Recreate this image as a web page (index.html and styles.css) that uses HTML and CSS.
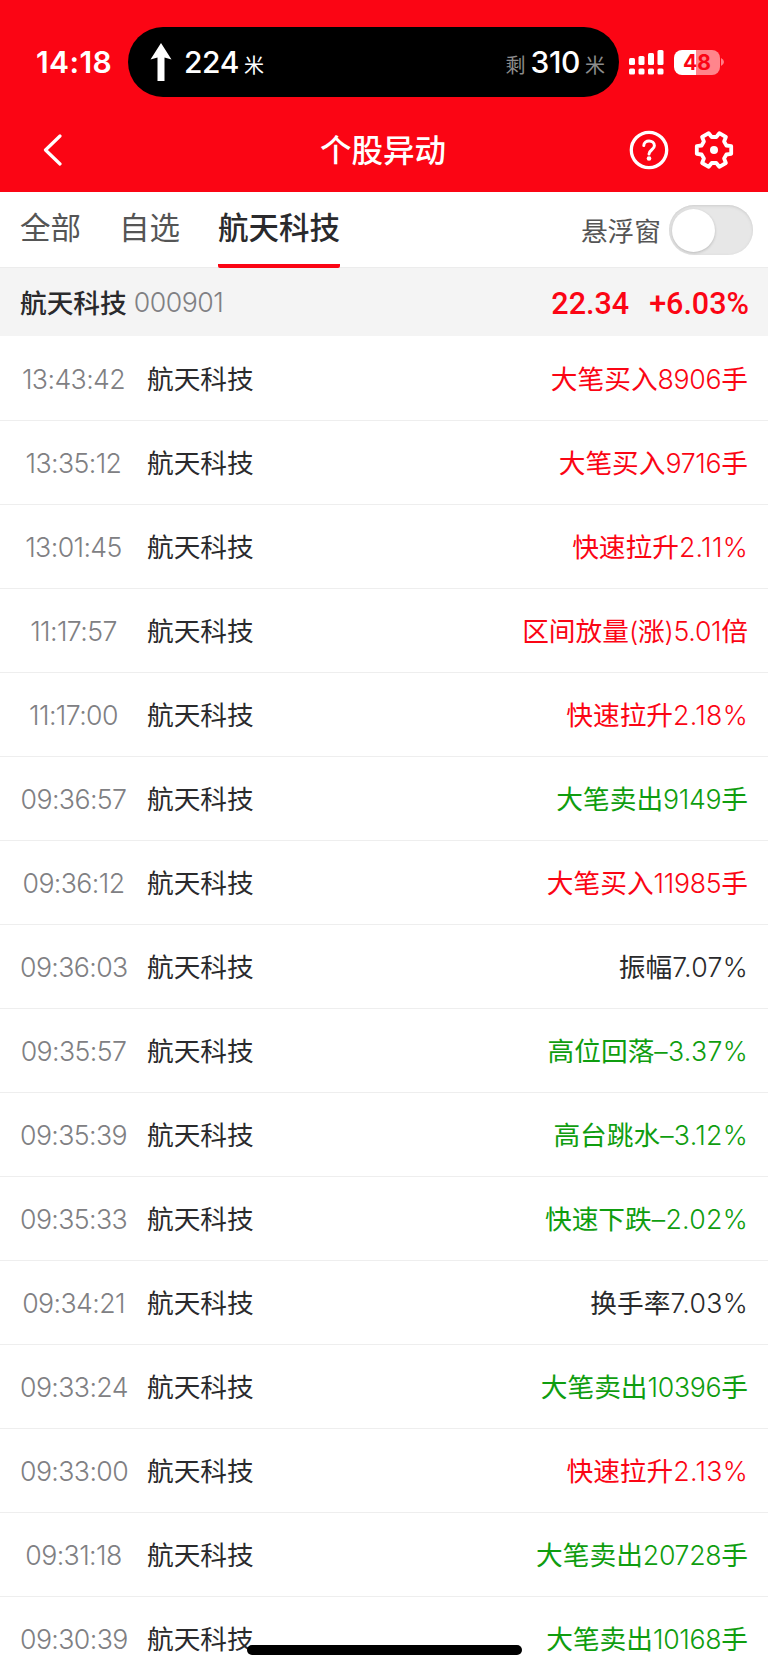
FILE: index.html
```
<!DOCTYPE html>
<html lang="zh-CN">

<head>
    <meta charset="UTF-8">
    <meta name="viewport" content="width=device-width, initial-scale=1.0">
    <title>个股异动</title>
    <link rel="stylesheet" href="styles.css">
</head>

<body>
    <header class="header">
        <div class="status-bar">
            <span class="clock">14:18</span>
            <div class="island">
                <svg class="arrow" width="22" height="38" viewBox="0 0 22 38">
                    <path d="M11 0L21.5 16.5L14.5 14.5V38H7.500V14.500L.5 16.500Z" fill="#fff" />
                </svg>
                <span class="distance">224</span>
                <span class="unit">米</span>
                <span class="unit gray left">剩</span>
                <span class="distance remain">310</span>
                <span class="unit gray last">米</span>
            </div>
            <svg class="signal" width="35" height="25" viewBox="0 0 35 25" fill="#fff">
                <rect x="0" y="8" width="6" height="7" rx="1.500" />
                <rect x="9.500" y="6" width="6" height="9" rx="1.500" />
                <rect x="19" y="3" width="6" height="12" rx="1.500" />
                <rect x="28.500" y="0" width="6" height="15" rx="1.500" />
                <rect x="0" y="18.500" width="6" height="6" rx="1.500" />
                <rect x="9.500" y="18.500" width="6" height="6" rx="1.500" />
                <rect x="19" y="18.500" width="6" height="6" rx="1.500" />
                <rect x="28.500" y="18.500" width="6" height="6" rx="1.500" />
            </svg>
            <div class="battery">48</div>
            <svg class="nub" width="3" height="8" viewBox="0 0 3 8">
                <path d="M0 0Q3 1.500 3 4T0 8Z" fill="#ff7d86" />
            </svg>
        </div>
        <nav class="nav">
            <svg class="back" width="20" height="32" viewBox="0 0 20 32">
                <path d="M17 2L2.500 16L17 30" fill="none" stroke="#fff" stroke-width="3.200" stroke-linecap="round" stroke-linejoin="round" />
            </svg>
            <h1>个股异动</h1>
            <svg class="help" width="40" height="40" viewBox="-20 -20 40 40" fill="none" stroke="#fff">
                <circle r="17.700" stroke-width="3.300" />
                <path d="M-5.200 -4.400C-5.200 -10.500 5.400 -10.500 5.400 -4.200C5.400 -.5 0 0 0 4" stroke-width="3" stroke-linecap="round" />
                <circle cy="8.500" r="2.300" fill="#fff" stroke="none" />
            </svg>
            <svg class="setting" width="40" height="40" viewBox="-20 -20 40 40">
                <path d="M12.400 -4.500L17.200 -3.800V3.800L12.400 4.500L10.100 8.500L11.900 13L5.300 16.800L2.300 13H-2.300L-5.300 16.800L-11.900 13L-10.100 8.500L-12.400 4.500L-17.200 3.800V-3.800L-12.400 -4.500L-10.100 -8.500L-11.900 -13L-5.300 -16.800L-2.300 -13H2.300L5.300 -16.800L11.900 -13L10.100 -8.500Z" fill="none" stroke="#fff" stroke-width="3.800" stroke-linejoin="round" />
                <circle r="4" fill="#fff" />
            </svg>
        </nav>
    </header>

    <div class="tabs">
        <a class="tab">全部</a>
        <a class="tab">自选</a>
        <a class="tab active">航天科技</a>
        <span class="switch-label">悬浮窗</span>
        <div class="switch"></div>
    </div>

    <div class="stock">
        <b>航天科技</b>
        <span class="code">000901</span>
        <span class="price">22.34</span>
        <span class="percent">+6.03%</span>
    </div>

    <ul class="list">
        <li><time>13:43:42</time><span>航天科技</span><p class="red">大笔买入<i>8906</i>手</p></li>
        <li><time>13:35:12</time><span>航天科技</span><p class="red">大笔买入<i>9716</i>手</p></li>
        <li><time>13:01:45</time><span>航天科技</span><p class="red">快速拉升<i class="rate">2.11%</i></p></li>
        <li><time>11:17:57</time><span>航天科技</span><p class="red">区间放量<i>(</i>涨<i>)5.01</i>倍</p></li>
        <li><time>11:17:00</time><span>航天科技</span><p class="red">快速拉升<i class="rate">2.18%</i></p></li>
        <li><time>09:36:57</time><span>航天科技</span><p class="green">大笔卖出<i>9149</i>手</p></li>
        <li><time>09:36:12</time><span>航天科技</span><p class="red">大笔买入<i>11985</i>手</p></li>
        <li><time>09:36:03</time><span>航天科技</span><p>振幅<i class="rate">7.07%</i></p></li>
        <li><time>09:35:57</time><span>航天科技</span><p class="green">高位回落<i class="rate">–3.37%</i></p></li>
        <li><time>09:35:39</time><span>航天科技</span><p class="green">高台跳水<i class="rate">–3.12%</i></p></li>
        <li><time>09:35:33</time><span>航天科技</span><p class="green">快速下跌<i class="rate">–2.02%</i></p></li>
        <li><time>09:34:21</time><span>航天科技</span><p>换手率<i class="rate">7.03%</i></p></li>
        <li><time>09:33:24</time><span>航天科技</span><p class="green">大笔卖出<i>10396</i>手</p></li>
        <li><time>09:33:00</time><span>航天科技</span><p class="red">快速拉升<i class="rate">2.13%</i></p></li>
        <li><time>09:31:18</time><span>航天科技</span><p class="green">大笔卖出<i>20728</i>手</p></li>
        <li><time>09:30:39</time><span>航天科技</span><p class="green">大笔卖出<i>10168</i>手</p></li>
    </ul>

    <div class="home-bar"></div>
</body>

</html>
```
FILE: styles.css
```
* {
    padding: 0;
    margin: 0;
    box-sizing: border-box;
}

body {
    width: 768px;
    height: 1670px;
    overflow: hidden;
    background-color: white;
    color: #2a2a2c;
    font-family: Inter, "Noto Sans CJK SC", sans-serif;
    font-size: 26.7px;
    white-space: nowrap;
}

svg {
    display: block;
    flex-shrink: 0;
}

/* header */
.header {
    height: 192px;
    background-color: #fb0514;
    color: white;
}

.status-bar {
    display: flex;
    align-items: center;
    height: 97px;
    padding-top: 27px;
}

.clock {
    width: 92px;
    margin-left: 36px;
    font-size: 30px;
    font-weight: 600;
    letter-spacing: 0.4px;
}

.island {
    display: flex;
    align-items: center;
    width: 491px;
    height: 70px;
    padding: 0 14px 0 22px;
    border-radius: 35px;
    background-color: black;
}

.distance {
    margin-left: 12px;
    font-size: 30px;
    font-weight: 500;
    letter-spacing: -0.4px;
}

.unit {
    margin: 8px 0 0 5px;
    font-size: 20px;
    line-height: 20px;
}

.gray {
    color: #8c8c8c;
}

.left {
    margin-left: auto;
}

.remain {
    margin-left: 5px;
}

.signal {
    margin-left: 10px;
}

.battery {
    width: 46px;
    height: 25px;
    margin-left: 10px;
    border-radius: 8px;
    background: linear-gradient(to right, white 22px, #ff858c 22px);
    color: #fb0514;
    font-size: 21px;
    font-weight: 700;
    line-height: 25px;
    text-align: center;
}

.nub {
    margin-left: 1px;
}

.nav {
    display: flex;
    align-items: center;
    height: 95px;
    padding: 10px 34px 0 43px;
}

.nav h1 {
    width: 128px;
    margin: 0 auto 3px 257px;
    font-size: 31.5px;
    font-weight: 500;
}

.help {
    margin-right: 25px;
}

/* tabs */
.tabs {
    display: flex;
    align-items: center;
    height: 76px;
    padding: 0 15px 0 20px;
    border-bottom: 1px solid #ececec;
}

.tab {
    height: 76px;
    margin-right: 38px;
    border-bottom: 4px solid transparent;
    color: #555;
    font-size: 30.5px;
    line-height: 72px;
}

.active {
    border-color: #fb0514;
    border-radius: 2px;
    color: #2a2a2c;
    font-weight: 500;
}

.switch-label {
    margin: 0 8px 0 auto;
    color: #555;
}

.switch {
    width: 84px;
    height: 50px;
    padding: 4px 3px;
    border-radius: 25px;
    background-color: #e7e7e7;
    box-shadow: inset 0 1px 3px #ccc;
}

.switch::before {
    content: "";
    display: block;
    width: 43px;
    height: 43px;
    border-radius: 50%;
    background-color: white;
    box-shadow: 0 1px 3px rgba(0, 0, 0, 0.2);
}

/* current stock */
.stock {
    display: flex;
    align-items: center;
    height: 68px;
    padding: 0 19px 0 20px;
    background-color: #f4f4f4;
}

.stock b {
    margin-bottom: 2px;
    font-weight: 500;
}

.code {
    margin-left: 7px;
    color: #808083;
    font-weight: 300;
    letter-spacing: -0.5px;
}

.price,
.percent {
    margin: 3px 0 0 20px;
    color: #fb0514;
    font-family: Roboto, sans-serif;
    font-size: 30.5px;
    font-weight: 500;
}

.price {
    margin-left: auto;
}

/* list */
.list {
    padding-top: 1px;
    list-style: none;
}

.list li {
    display: flex;
    align-items: center;
    height: 84px;
    padding: 0 20px 2px;
    border-bottom: 1px solid #eee;
}

.list time {
    width: 107px;
    margin: 2px 20px 0 0;
    color: #808083;
    font-weight: 330;
    letter-spacing: -0.6px;
    text-align: center;
}

.list p {
    margin-left: auto;
}

.list i {
    font-style: normal;
    font-weight: 350;
    letter-spacing: -0.3px;
}

.list .rate {
    letter-spacing: 0.3px;
}

.list .red {
    color: #fb0514;
}

.list .green {
    color: #0f9d0f;
}

.home-bar {
    position: absolute;
    left: 247px;
    top: 1645px;
    width: 275px;
    height: 10px;
    border-radius: 5px;
    background-color: black;
}
```
